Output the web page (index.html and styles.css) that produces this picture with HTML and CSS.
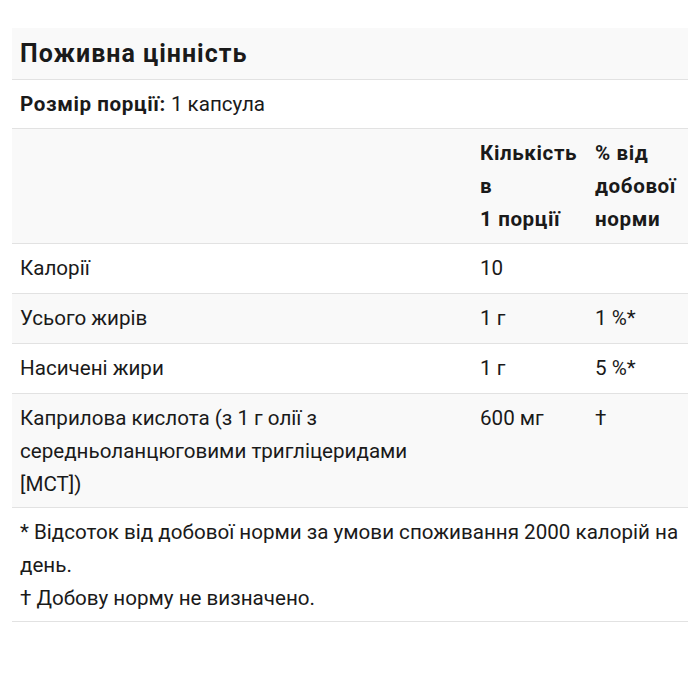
FILE: index.html
```html
<!DOCTYPE html>
<html lang="uk">
<head>
<meta charset="utf-8">
<link rel="stylesheet" href="styles.css">
</head>
<body>
<table class="facts">
  <colgroup>
    <col class="c1">
    <col class="c2">
    <col class="c3">
  </colgroup>
  <thead>
    <tr class="title-row"><th colspan="3" class="title">Поживна цінність</th></tr>
    <tr class="serving-row"><td colspan="3"><b>Розмір порції:</b> 1 капсула</td></tr>
    <tr class="head-row gray">
      <th></th>
      <th>Кількість в<br>1&nbsp;порції</th>
      <th>% від добової норми</th>
    </tr>
  </thead>
  <tbody>
    <tr><td>Калорії</td><td>10</td><td></td></tr>
    <tr class="gray"><td>Усього жирів</td><td>1 г</td><td>1 %*</td></tr>
    <tr><td>Насичені жири</td><td>1 г</td><td>5 %*</td></tr>
    <tr class="gray tall"><td>Каприлова кислота (з 1 г олії з середньоланцюговими тригліцеридами [MCT])</td><td>600 мг</td><td>†</td></tr>
    <tr class="foot-row"><td colspan="3">* Відсоток від добової норми за умови споживання 2000 калорій на день.<br>† Добову норму не визначено.</td></tr>
  </tbody>
</table>
</body>
</html>
```

FILE: styles.css
```css
html, body {
  margin: 0;
  padding: 0;
  background: #ffffff;
}
body {
  padding: 28px 12px 0 12px;
  font-family: Roboto, "Liberation Sans", sans-serif;
  font-size: 20.6px;
  color: #1a1a1a;
}
.facts {
  width: 676px;
  border-collapse: collapse;
  table-layout: fixed;
}
.c1 { width: 460px; }
.c2 { width: 115px; }
.c3 { width: 101px; }
.facts th, .facts td {
  text-align: left;
  vertical-align: top;
  padding: 8px;
  line-height: 33px;
  border-bottom: 1px solid #e2e2e2;
}
.facts th, .facts b {
  font-weight: 700;
  letter-spacing: 0.6px;
}
.title-row th {
  background: #f9f9f9;
  font-size: 25px;
  letter-spacing: 1px;
  line-height: 35px;
}
.serving-row td {
  padding-bottom: 7px;
}
.head-row th {
  padding-bottom: 7px;
}
.gray td, .gray th {
  background: #f9f9f9;
}
.tall td {
  padding-bottom: 6px;
}
.foot-row td {
  padding-bottom: 6px;
}
```
